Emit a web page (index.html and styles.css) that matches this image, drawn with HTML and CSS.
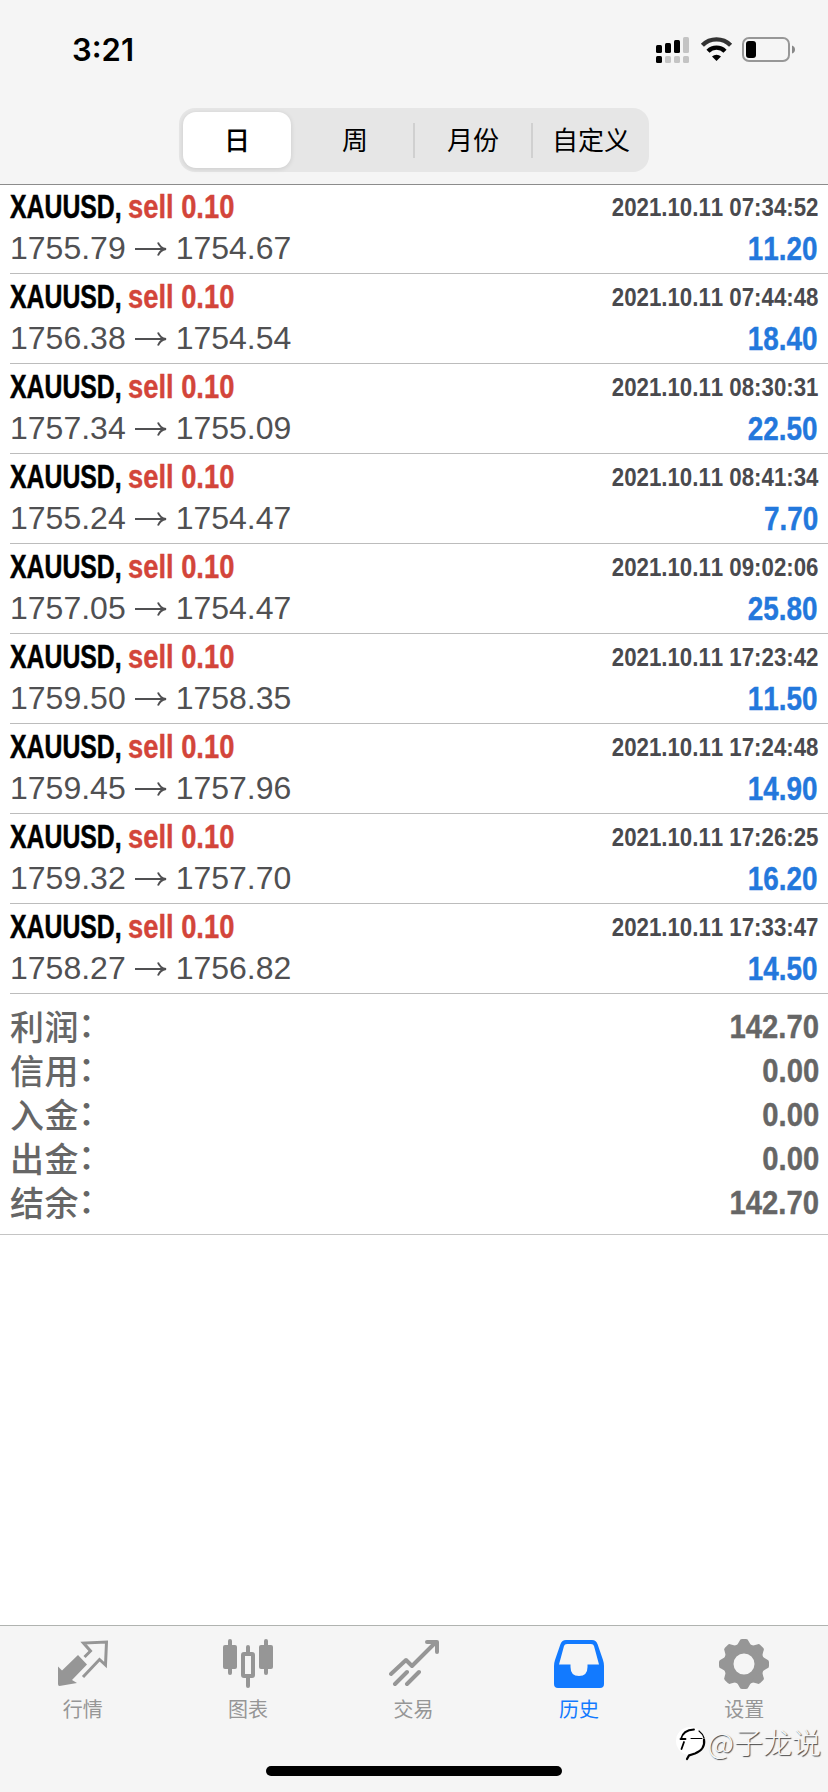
FILE: index.html
```html
<!DOCTYPE html>
<html lang="zh-CN">
<head>
<meta charset="utf-8">
<title>历史</title>
<link rel="stylesheet" href="styles.css">
</head>
<body>
<div class="app">
  <header class="header">
    <div class="status">
      <span class="clock">3:21</span>
      <svg class="status-icons" width="142" height="28" viewBox="0 0 142 28">
        <g fill="#000"><rect x="1" y="9" width="6" height="8" rx="1.5"/><rect x="10" y="7" width="6" height="10" rx="1.5"/><rect x="19" y="4" width="6" height="13" rx="1.5"/><rect x="1" y="20" width="6" height="7" rx="1.5"/></g>
        <g fill="#c4c4c4"><rect x="28" y="1" width="6" height="16" rx="1.5"/><rect x="10" y="20" width="6" height="7" rx="1.5"/><rect x="19" y="20" width="6" height="7" rx="1.5"/><rect x="28" y="20" width="6" height="7" rx="1.5"/></g>
        <g fill="none" stroke-width="4.4"><path d="M47.4 9.2a20 20 0 0 1 28.2 0" stroke="#333"/><path d="M53 15.2a12 12 0 0 1 17 0" stroke="#000"/></g>
        <path d="M57 20.4a6.6 6.6 0 0 1 9 0L61.500 25z" fill="#000"/>
        <rect x="88" y="2" width="46" height="23" rx="6" fill="none" stroke="#979797" stroke-width="2"/>
        <rect x="91" y="5" width="10" height="17" rx="3" fill="#000"/>
        <path d="M137 9.500q3 1 3 4t-3 4z" fill="#888"/>
      </svg>
    </div>
    <nav class="segments">
      <span class="segment selected">日</span>
      <span class="segment">周</span>
      <span class="segment divided">月份</span>
      <span class="segment divided">自定义</span>
    </nav>
  </header>
  <main class="content">
    <ul class="deals" id="deals"></ul>
    <dl class="summary">
      <div class="total"><dt>利润<i>：</i></dt><dd>142.70</dd></div>
      <div class="total"><dt>信用<i>：</i></dt><dd>0.00</dd></div>
      <div class="total"><dt>入金<i>：</i></dt><dd>0.00</dd></div>
      <div class="total"><dt>出金<i>：</i></dt><dd>0.00</dd></div>
      <div class="total"><dt>结余<i>：</i></dt><dd>142.70</dd></div>
    </dl>
  </main>
  <footer class="tabbar">
    <div class="tabs">
      <div class="tab"><svg class="icon" viewBox="0 0 50 50"><path d="M0 27.500l4 4L20 16 29 25.500 14 41l5 3L1.500 47Q0 47 0 45z" fill="currentColor"/><path d="M26.500 18l6-6-7-8L48.500 3l-1 23-6-5.500L25 38" fill="none" stroke="currentColor" stroke-width="3"/></svg><span>行情</span></div>
      <div class="tab"><svg class="icon" viewBox="0 0 50 50"><g fill="currentColor"><rect x="0" y="6" width="14" height="24" rx="2"/><rect x="36" y="6" width="14" height="24" rx="2"/><rect x="5" y="0" width="4" height="36" rx="2"/><rect x="41" y="0" width="4" height="36" rx="2"/><rect x="23" y="6" width="4" height="9" rx="2"/><rect x="23" y="37" width="4" height="12" rx="2"/></g><rect x="20" y="15" width="10" height="22" rx="1" fill="none" stroke="currentColor" stroke-width="4"/></svg><span>图表</span></div>
      <div class="tab"><svg class="icon" viewBox="0 0 50 50"><g fill="none" stroke="currentColor" stroke-width="4" stroke-linecap="round" stroke-linejoin="round"><path d="M2 35L17 21l6 6L47 3M38 3h10v10M6 45l12-12M18 45l12-12"/></g></svg><span>交易</span></div>
      <div class="tab active"><svg class="icon" viewBox="0 0 50 50"><path fill="currentColor" fill-rule="evenodd" d="M12 1h26q4 0 5.500 4L49 21q1 3 1 6v18q0 4-4 4H4q-4 0-4-4V27q0-3 1-6L6.500 5Q8 1 12 1zM13 5q-2.500 0-3 2L5 25.500h11.500V28q0 9 8.500 9t8.500-9V25.500H45L40 7q-.5-2-3-2z"/></svg><span>历史</span></div>
      <div class="tab"><svg class="icon" viewBox="0 0 50 50"><circle cx="25" cy="25" r="15.500" fill="none" stroke="currentColor" stroke-width="10"/><g fill="currentColor" id="teeth"></g></svg><span>设置</span></div>
    </div>
    <div class="home"></div>
    <div class="watermark"><svg width="33" height="36" viewBox="0 0 33 36" fill="none"><circle cx="15" cy="15" r="14" fill="#fff"/><g stroke="#000" stroke-linecap="round"><path d="M6 13Q8 4 19 3.500M5.500 13h5M9 16L6.500 23" stroke-width="1.800"/><path d="M16 12.500h11" stroke-width="1"/><path d="M24 5q4 3 5 7" stroke-width="1.200"/><path d="M29 13.500q1.500 10-9 14l-6 2-2 3.500" stroke-width="2.200"/></g></svg><span>@子龙说</span></div>
  </footer>
</div>
<script src="app.js"></script>
</body>
</html>
```
FILE: styles.css
```css
* { box-sizing: border-box; margin: 0; padding: 0; }
body { background: #fff; font-family: "Liberation Sans", "Noto Sans CJK SC", sans-serif; font-kerning: none; }
.app { width: 828px; height: 1792px; display: flex; flex-direction: column; overflow: hidden; }
.header { height: 185px; background: #f5f5f5; border-bottom: 1px solid #8c8c8c; flex: none; }
.status { height: 108px; display: flex; justify-content: space-between; padding: 36px 31px 0 72px; }
.clock { font: 600 31px/28px Inter, sans-serif; }
.status-icons { display: block; }
.segments { width: 470px; height: 64px; margin-left: 179px; padding: 4px 0 4px 4px; border-radius: 16px; background: #e6e6e6; display: flex; align-items: center; }
.segment { flex: 1; height: 35px; padding-bottom: 3px; display: flex; align-items: center; justify-content: center; font-size: 26px; font-family: "Noto Sans CJK SC", sans-serif; line-height: 32px; border-left: 2px solid transparent; }
.segment.divided { border-left-color: #d0d0d0; }
.segment.selected { height: 56px; flex: none; width: 108px; margin-right: 4px; border: 0; border-radius: 13px; background: #fff; font-weight: 500; box-shadow: 0 1px 5px rgba(0,0,0,.12); }
.content { flex: 1; }
.deals { list-style: none; padding-left: 10px; }
.deal { height: 90px; border-bottom: 1px solid #bcbcbc; padding: 3px 10px 0 0; }
.deal:first-child { height: 89px; padding-top: 2px; }
.line { display: flex; justify-content: space-between; align-items: center; height: 41px; white-space: nowrap; line-height: 41px; }
.name { display: flex; font-weight: 700; font-size: 33px; padding-bottom: 2px; }
.symbol { width: 118px; }
.symbol span, .side span { display: inline-block; transform-origin: left; }
.symbol span { transform: scaleX(.752); -webkit-text-stroke: .5px; }
.side { color: #d3453a; }
.side span { transform: scaleX(.828); -webkit-text-stroke: .4px; }
.time { font-weight: 700; font-size: 26px; color: #4a4a4e; transform: scaleX(.856); transform-origin: right; }
.prices { display: flex; align-items: center; font-size: 32px; color: #505052; }
.prices svg { margin: 0 9px; }
.profit { font-weight: 700; font-size: 33px; color: #2378dc; transform: scaleX(.845); transform-origin: right; -webkit-text-stroke: .4px; }
.summary { height: 241px; padding: 10px 9px 0 10px; border-bottom: 1px solid #c4c4c4; color: #666; }
.total { height: 44px; display: flex; align-items: center; justify-content: space-between; line-height: 38px; }
.total dt { font: 500 34px/36px "Liberation Sans", "Noto Sans CJK SC", sans-serif; letter-spacing: .5px; padding-top: 3px; }
.total i { font-style: normal; position: relative; left: -1px; top: -3px; }
.total dd { font-weight: 700; font-size: 34px; transform: scaleX(.86); transform-origin: right; -webkit-text-stroke: .4px; }
.tabbar { position: relative; height: 167px; background: #f5f5f5; border-top: 1px solid #b0b3b0; flex: none; }
.tabs { display: flex; padding: 13px 1px 0 0; height: 140px; }
.tab { flex: 1; display: flex; flex-direction: column; align-items: center; color: #969696; font: 400 20px/28px "Noto Sans CJK SC", sans-serif; }
.tab.active { color: #127aff; }
.icon { width: 50px; height: 50px; margin-bottom: 6px; }
.home { width: 296px; height: 10px; border-radius: 5px; background: #000; margin: 0 auto; }
.watermark { position: absolute; right: 7px; top: 94px; display: flex; align-items: center; color: #f7f7f7; font: 300 29px/36px "Noto Sans CJK SC", sans-serif; text-shadow: 1px 1px 1px #444; }
.watermark svg { margin-top: 6px; }
```
FILE: app.js
```js
const deals = [
  ["1755.79", "1754.67", "07:34:52", "11.20"],
  ["1756.38", "1754.54", "07:44:48", "18.40"],
  ["1757.34", "1755.09", "08:30:31", "22.50"],
  ["1755.24", "1754.47", "08:41:34", "7.70"],
  ["1757.05", "1754.47", "09:02:06", "25.80"],
  ["1759.50", "1758.35", "17:23:42", "11.50"],
  ["1759.45", "1757.96", "17:24:48", "14.90"],
  ["1759.32", "1757.70", "17:26:25", "16.20"],
  ["1758.27", "1756.82", "17:33:47", "14.50"]
];
const arrow = '<svg width="32" height="16" viewBox="0 0 32 16" fill="none" stroke="currentColor" stroke-width="2"><path d="M0 8h30M23 1.500Q25 7 31 8Q25 9 23 14.500"/></svg>';
document.getElementById("deals").innerHTML = deals.map(([open, close, time, profit]) => `
  <li class="deal">
    <div class="line"><div class="name"><div class="symbol"><span>XAUUSD,</span></div><div class="side"><span>sell 0.10</span></div></div><div class="time">2021.10.11 ${time}</div></div>
    <div class="line"><div class="prices"><span>${open}</span>${arrow}<span>${close}</span></div><div class="profit">${profit}</div></div>
  </li>`).join("");

// Eight gear teeth around the settings ring
let teeth = "";
for (let a = 0; a < 360; a += 45) {
  teeth += `<path transform="rotate(${a} 25 25)" d="M17 8L20.500 2Q21 0 23 0h4q2 0 2.500 2L33 8z"/>`;
}
document.getElementById("teeth").innerHTML = teeth;
```
